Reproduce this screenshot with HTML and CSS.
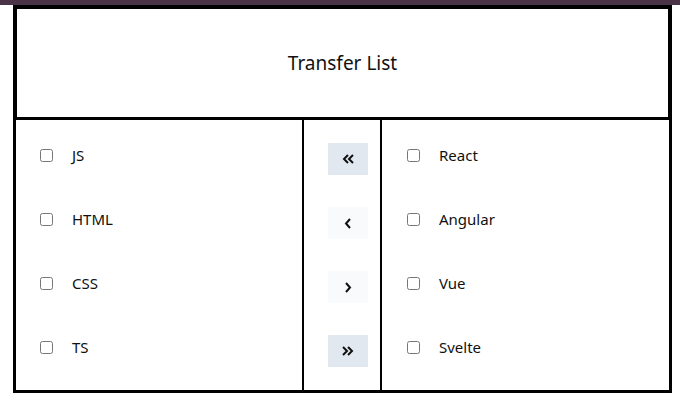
FILE: index.html
```html
<!DOCTYPE html>
<html>
<head>
<meta charset="utf-8">
<link rel="stylesheet" href="styles.css">
</head>
<body>
<div class="topbar"></div>
<div class="app">
  <div class="header">Transfer List</div>
  <div class="lists">
    <ul class="list list-left">
      <li class="item"><input type="checkbox" class="check"><span>JS</span></li>
      <li class="item"><input type="checkbox" class="check"><span>HTML</span></li>
      <li class="item"><input type="checkbox" class="check"><span>CSS</span></li>
      <li class="item"><input type="checkbox" class="check"><span>TS</span></li>
    </ul>
    <div class="actions">
      <button class="btn btn-strong" aria-label="move all left">
        <svg width="12" height="10" viewBox="0 0 12 10"><polyline points="6,1 2,5 6,9" fill="none" stroke="#111" stroke-width="2"/><polyline points="11,1 7,5 11,9" fill="none" stroke="#111" stroke-width="2"/></svg>
      </button>
      <button class="btn btn-light" aria-label="move left">
        <svg width="8" height="11" viewBox="0 0 8 11"><polyline points="6,1 2,5.5 6,10" fill="none" stroke="#111" stroke-width="2"/></svg>
      </button>
      <button class="btn btn-light" aria-label="move right">
        <svg width="8" height="11" viewBox="0 0 8 11"><polyline points="2,1 6,5.5 2,10" fill="none" stroke="#111" stroke-width="2"/></svg>
      </button>
      <button class="btn btn-strong" aria-label="move all right">
        <svg width="12" height="10" viewBox="0 0 12 10"><polyline points="1,1 5,5 1,9" fill="none" stroke="#111" stroke-width="2"/><polyline points="6,1 10,5 6,9" fill="none" stroke="#111" stroke-width="2"/></svg>
      </button>
    </div>
    <ul class="list list-right">
      <li class="item"><input type="checkbox" class="check"><span>React</span></li>
      <li class="item"><input type="checkbox" class="check"><span>Angular</span></li>
      <li class="item"><input type="checkbox" class="check"><span>Vue</span></li>
      <li class="item"><input type="checkbox" class="check"><span>Svelte</span></li>
    </ul>
  </div>
</div>
</body>
</html>
```

FILE: styles.css
```css
html, body {
  margin: 0;
  padding: 0;
  background: #ffffff;
}
body {
  font-family: "Noto Sans", "Open Sans", sans-serif;
  color: #111111;
  width: 680px;
  height: 411px;
  overflow: hidden;
}
.topbar {
  height: 5px;
  background: #4a3347;
}
.app {
  margin-left: 13px;
  width: 659px;
}
.header {
  height: 108px;
  border: 4px solid #000;
  border-bottom: none;
  display: flex;
  align-items: center;
  justify-content: center;
  font-size: 19px;
}
.lists {
  display: grid;
  grid-template-columns: 288px 78px 1fr;
  border: 3px solid #000;
  height: 270px;
}
.list {
  list-style: none;
  margin: 0;
  padding: 3px 0 0 0;
}
.list-left {
  border-right: 2px solid #000;
  padding-left: 24px;
}
.list-right {
  padding-left: 25px;
}
.item {
  height: 64px;
  display: flex;
  align-items: center;
  font-size: 15px;
}
.check {
  width: 13px;
  height: 13px;
  margin: 0 19px 0 0;
}
.actions {
  border-right: 2px solid #000;
  display: flex;
  flex-direction: column;
  align-items: flex-start;
  gap: 32px;
  padding: 23px 0 0 24px;
}
.btn {
  width: 40px;
  height: 32px;
  border: none;
  padding: 0;
  display: flex;
  align-items: center;
  justify-content: center;
  cursor: pointer;
}
.btn-strong {
  background: #e2e8f0;
}
.btn-light {
  background: #f8fafc;
}
```
